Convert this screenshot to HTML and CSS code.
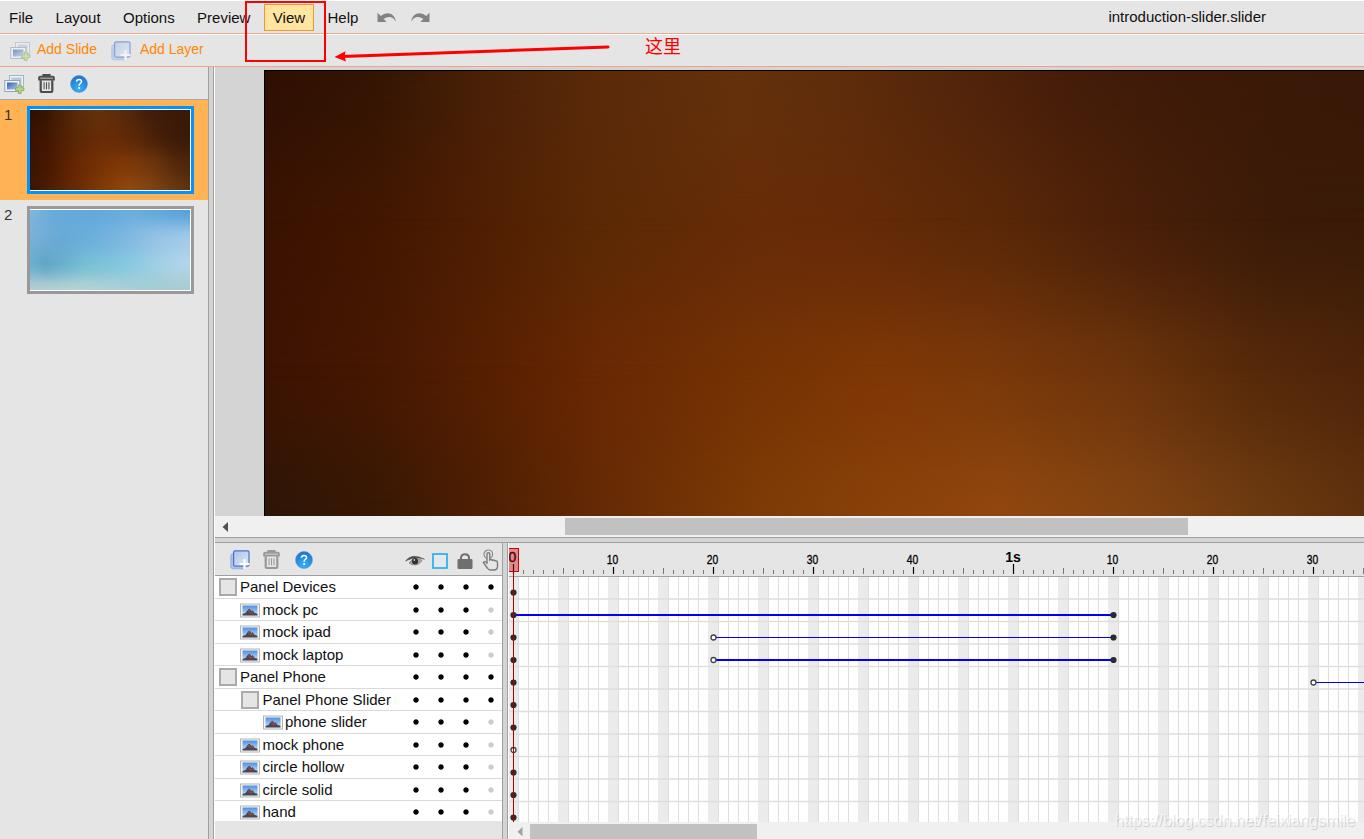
FILE: index.html
```html
<!DOCTYPE html>
<html lang="en">
<head>
    <meta charset="UTF-8">
    <meta name="viewport" content="width=device-width, initial-scale=1.0">
    <title>introduction-slider.slider</title>
    <link rel="stylesheet" href="styles.css">
</head>
<body>
    <svg class="defs" width="0" height="0">
        <defs>
            <linearGradient id="blueFill" x1="0" y1="0" x2="1" y2="1">
                <stop offset="0" stop-color="#2f5fb5"/>
                <stop offset="1" stop-color="#b5cdf0"/>
            </linearGradient>
            <linearGradient id="paperFill" x1="0" y1="0" x2="1" y2="1">
                <stop offset="0" stop-color="#a9c4e8"/>
                <stop offset="1" stop-color="#dfe9f7"/>
            </linearGradient>
            <radialGradient id="helpFill" cx="0.5" cy="0.8" r="0.8">
                <stop offset="0" stop-color="#35b5f5"/>
                <stop offset="1" stop-color="#2070cc"/>
            </radialGradient>
            <linearGradient id="skyFill" x1="0" y1="0" x2="0" y2="1">
                <stop offset="0" stop-color="#4f8fe0"/>
                <stop offset="1" stop-color="#c5e2fb"/>
            </linearGradient>
        </defs>
        <symbol id="icon-slide" viewBox="0 0 21 20">
            <rect x="5.5" y="1.5" width="14" height="11" fill="#eef2f5" stroke="#a3b5c2"/>
            <rect x="7.5" y="3.5" width="10" height="7" fill="#b5c8e0"/>
            <rect x="0.8" y="6.5" width="15" height="11" fill="#f2f5f8" stroke="#8fa5b5"/>
            <rect x="3" y="8.5" width="10.5" height="7" fill="url(#blueFill)"/>
            <path d="M14.3 11h2.8v2.8h2.8v2.8h-2.8v2.8h-2.8v-2.8h-2.8v-2.8h2.8z" fill="#b9d88a" stroke="#7da352" stroke-width="0.8"/>
        </symbol>
        <symbol id="icon-layer" viewBox="0 0 20 20">
            <rect x="0.8" y="3.8" width="15" height="15" rx="2" fill="#a9c2e6" stroke="#8aa8d6" stroke-width="0.8"/>
            <rect x="3.6" y="0.8" width="15.4" height="15.4" rx="1.5" fill="url(#paperFill)" stroke="#4d6fd6" stroke-width="1.2"/>
            <path d="M14.5 9v10M9.5 14h10" stroke="#fff" stroke-width="2.2" fill="none"/>
        </symbol>
        <symbol id="icon-trash" viewBox="0 0 16 18">
            <path d="M5 2.8V1h6v1.800" fill="none" stroke="currentColor" stroke-width="1.8"/>
            <path d="M1 5.2V3.600q0-1 1-1h12q1 0 1 1v1.600z" fill="none" stroke="currentColor" stroke-width="1.8"/>
            <path d="M2.5 6v9.600q0 1.500 1.500 1.500h8q1.500 0 1.500-1.500V6" fill="none" stroke="currentColor" stroke-width="2.1"/>
            <path d="M5.7 7.800v6.700M8 7.800v6.700M10.300 7.800v6.700" stroke="currentColor" stroke-width="1"/>
        </symbol>
        <symbol id="icon-help" viewBox="0 0 18 18">
            <circle cx="9" cy="9" r="8.4" fill="url(#helpFill)" stroke="#4a8fd2" stroke-width="0.6"/>
            <path d="M6.5 6.6Q6.700 4.400 9 4.400q2.500 0 2.500 2 0 1.200-1.300 2.100Q9.100 9.300 9.100 10.700" fill="none" stroke="#fff" stroke-width="1.5"/>
            <circle cx="9.1" cy="13" r="1" fill="#fff"/>
        </symbol>
        <symbol id="icon-undo" viewBox="0 0 20 12">
            <path d="M0.5 0.8V10h9.2L6.6 7.1q3.4-2.8 7-2 3 .8 5.3 4.3Q18 4.2 14 2 8.5-.4 3.8 4z" fill="#828282"/>
        </symbol>
        <symbol id="icon-image" viewBox="0 0 20 14">
            <rect x="0.5" y="0.5" width="19" height="13" fill="#f6f6f6" stroke="#b4b4b4"/>
            <rect x="2.5" y="2" width="15" height="10" fill="url(#skyFill)"/>
            <path d="M2.5 10.500l3-1 2.600-3.500 1.700-.8 1.400 2.300 1.400-.8 2.200 2.700 2.700.8V12h-15z" fill="#494752"/>
            <path d="M7.6 7l1.6-1.6 1.2 3 2-1 1.5 2.2-4 .4z" fill="#8a4a45"/>
        </symbol>
    </svg>

    <div class="app">
        <div class="menubar">
            <div class="menu">
                <span class="menu-item">File</span>
                <span class="menu-item">Layout</span>
                <span class="menu-item">Options</span>
                <span class="menu-item">Preview</span>
                <span class="menu-item active">View</span>
                <span class="menu-item">Help</span>
            </div>
            <svg class="undo" width="20" height="12"><use href="#icon-undo"/></svg>
            <svg class="undo redo" width="20" height="12"><use href="#icon-undo"/></svg>
            <span class="filename">introduction-slider.slider</span>
        </div>

        <div class="toolbar">
            <svg class="faded" width="21" height="20"><use href="#icon-slide"/></svg>
            <span class="tool-label">Add Slide</span>
            <svg class="faded layer" width="20" height="20"><use href="#icon-layer"/></svg>
            <span class="tool-label">Add Layer</span>
        </div>

        <div class="main">
            <div class="sidebar">
                <div class="side-tools">
                    <svg width="21" height="20"><use href="#icon-slide"/></svg>
                    <svg class="trash" width="17" height="19"><use href="#icon-trash"/></svg>
                    <svg width="18" height="18"><use href="#icon-help"/></svg>
                </div>
                <div class="slide selected">
                    <span class="slide-number">1</span>
                    <div class="thumb"><div class="art thumb-art brown"><i></i><i></i><i></i><i></i></div></div>
                </div>
                <div class="slide">
                    <span class="slide-number">2</span>
                    <div class="thumb"><div class="art blue"><i></i><i></i><i></i><i></i></div></div>
                </div>
            </div>

            <div class="splitter-v"></div>

            <div class="content">
                <div class="workspace">
                    <div class="stage"><div class="art brown"><i></i><i></i><i></i><i></i></div></div>
                </div>
                <div class="scrollbar">
                    <svg width="6" height="10"><path d="M6 0v10L0.5 5z" fill="#505050"/></svg>
                    <div class="scroll-thumb"></div>
                </div>
                <div class="splitter-h"></div>

                <div class="bottom">
                    <div class="layers">
                        <div class="layer-tools">
                            <svg class="add" width="20" height="20"><use href="#icon-layer"/></svg>
                            <svg class="trash light" width="17" height="19"><use href="#icon-trash"/></svg>
                            <svg class="help" width="18" height="18"><use href="#icon-help"/></svg>
                            <svg class="col-icon" width="20" height="14" viewBox="0 0 20 14">
                                <path d="M0.5 7Q7-1.500 19.500 5.300 12 2.500 7 4.500 3.500 5.500 0.500 7z" fill="#4a4a4a" stroke="#4a4a4a" stroke-width="0.5"/>
                                <path d="M4 9Q7 4.500 11 4.500q4 0 6 2Q14 11 10 11 6.500 11 4 9z" fill="#aaa" stroke="#777" stroke-width="0.7"/>
                                <circle cx="10" cy="7.2" r="3.1" fill="#303030"/>
                                <circle cx="9.3" cy="6" r="0.9" fill="#ccc"/>
                            </svg>
                            <svg class="col-icon" width="16" height="16"><rect x="1" y="1" width="14" height="14" fill="#e2e8ec" stroke="#1eaaf6" stroke-width="1.6"/></svg>
                            <svg class="col-icon" width="16" height="16" viewBox="0 0 16 16">
                                <path d="M4 7V5q0-3.800 4-3.800T12 5v2" fill="none" stroke="#6f6f6f" stroke-width="2"/>
                                <rect x="0.5" y="6" width="15" height="10" rx="1.2" fill="#6f6f6f"/>
                            </svg>
                            <svg class="col-icon" width="17" height="22" viewBox="0 0 17 22">
                                <circle cx="6.3" cy="5.3" r="4.3" fill="none" stroke="#8a8a8a" stroke-width="1.2"/>
                                <path d="M5 15V5.300q0-1.500 1.400-1.500t1.400 1.500V11q1.400-1 2.500.3 1.500-.8 2.500.5 2.700-.4 2.700 2v3.500q0 3.700-3.500 3.700H8.500q-2 0-3.200-2L1.400 13.400q1.200-1.800 3.600.6" fill="#e5e5e5" stroke="#7c7c7c" stroke-width="1.4"/>
                            </svg>
                        </div>
                        <div class="layer-list" id="layerList"></div>
                    </div>

                    <div class="splitter-v"></div>

                    <div class="timeline">
                        <svg class="ruler" id="ruler" width="855" height="33"></svg>
                        <svg class="grid" id="grid" width="855" height="245"></svg>
                        <div class="playhead"></div>
                        <div class="time-scroll">
                            <svg width="6" height="10"><path d="M5.5 0v9.500L0.500 4.700z" fill="#a3a3a3"/></svg>
                            <div class="time-thumb"></div>
                        </div>
                    </div>
                </div>
            </div>
        </div>
    </div>

    <div class="mark-box"></div>
    <svg class="mark-arrow" width="280" height="19" viewBox="0 0 280 19">
        <path d="M8 13.5L274 4" stroke="#fe0000" stroke-width="3" stroke-linecap="round"/>
        <path d="M0.5 13.900L11.500 8.300 10.500 13.200 12 18.500z" fill="#fe0000"/>
    </svg>
    <span class="mark-text">这里</span>
    <span class="watermark">https://blog.csdn.net/feixiangsmile</span>

    <script>
        // depth = indent level, keys = [frame, filled], bars = [from, to, thickness]
        const layers = [
            { name: "Panel Devices", depth: 0, panel: true, keys: [[0, 1]] },
            { name: "mock pc", depth: 1, keys: [[0, 1], [60, 1]], bars: [0, 60, 2] },
            { name: "mock ipad", depth: 1, keys: [[0, 1], [20, 0], [60, 1]], bars: [20, 60, 1] },
            { name: "mock laptop", depth: 1, keys: [[0, 1], [20, 0], [60, 1]], bars: [20, 60, 2] },
            { name: "Panel Phone", depth: 0, panel: true, keys: [[0, 1], [80, 0]], bars: [80, 90, 1] },
            { name: "Panel Phone Slider", depth: 1, panel: true, keys: [[0, 1]] },
            { name: "phone slider", depth: 2, keys: [[0, 1]] },
            { name: "mock phone", depth: 1, keys: [[0, 0]] },
            { name: "circle hollow", depth: 1, keys: [[0, 1]] },
            { name: "circle solid", depth: 1, keys: [[0, 1]] },
            { name: "hand", depth: 1, keys: [[0, 1]] }
        ];
        const ROW = 22.5;
        const X0 = 4.5;

        function drawLayers() {
            let html = "";
            layers.forEach(layer => {
                const icon = layer.panel
                    ? '<span class="panel-icon"></span>'
                    : '<svg class="image-icon" width="20" height="15"><use href="#icon-image"/></svg>';
                html += `<div class="layer-row depth-${layer.depth}">
                    <span class="layer-icon">${icon}</span><span class="layer-name">${layer.name}</span>
                    <span class="dots"><b></b><b></b><b></b><b class="${layer.panel ? "" : "off"}"></b></span>
                </div>`;
            });
            document.getElementById("layerList").innerHTML = html;
        }

        function drawRuler() {
            let svg = "";
            for (let f = 0; f <= 85; f++) {
                const x = X0 + f * 10;
                if (f % 50 === 0) svg += `<path d="M${x} 21v10" class="tick second"/>`;
                else if (f % 10 === 0) svg += `<path d="M${x} 24v7" class="tick major"/>`;
                else if (f % 5 === 0) svg += `<path d="M${x} 25v6" class="tick"/>`;
                else svg += `<path d="M${x} 27v4" class="tick"/>`;

                if (f === 0) svg += `<text x="3.5" y="19" class="zero">0</text>`;
                else if (f === 50) svg += `<text x="${x - 0.5}" y="19" class="sec">1s</text>`;
                else if (f % 10 === 0) svg += `<text x="${x - 1}" y="21" class="num" textLength="11.5" lengthAdjust="spacingAndGlyphs">${f % 50}</text>`;
            }
            document.getElementById("ruler").innerHTML = svg;
        }

        function drawGrid() {
            let svg = "";
            for (let f = 0; f <= 86; f++) {
                if (f % 5 === 0) svg += `<rect x="${f * 10 - 1}" y="0" width="10" height="245" fill="#ebebeb"/>`;
                svg += `<path d="M${f * 10 + 9.5} 0v245" stroke="#dedede"/>`;
            }
            for (let r = 1; r < layers.length; r++) {
                svg += `<path d="M0 ${r * ROW - 0.5}h855" stroke="#dedede" stroke-width="1.3"/>`;
            }
            layers.forEach((layer, r) => {
                const y = 15.5 + r * ROW;
                if (layer.bars) {
                    const [from, to, w] = layer.bars;
                    svg += `<path d="M${X0 + from * 10} ${w === 2 ? Math.round(y) : Math.floor(y) + 0.5}H${X0 + to * 10}" stroke="#0000fe" stroke-width="${w}"/>`;
                }
                layer.keys.forEach(([f, filled]) => {
                    svg += `<circle cx="${X0 + f * 10}" cy="${y}" r="${filled ? 3.1 : 2.5}" class="${filled ? "key" : "key hollow"}"/>`;
                });
            });
            document.getElementById("grid").innerHTML = svg;
        }

        drawLayers();
        drawRuler();
        drawGrid();
    </script>
</body>
</html>
```

FILE: styles.css
```css
* {
    box-sizing: border-box;
}

body {
    margin: 0;
    font-family: "Liberation Sans", Arial, "Noto Sans CJK SC", sans-serif;
    font-size: 15px;
    color: #111;
    background: #e5e5e5;
    overflow: hidden;
}

svg {
    display: block;
    flex: none;
}

.defs {
    position: absolute;
}

.app {
    width: 100%;
    height: 839px;
    display: flex;
    flex-direction: column;
}

/* menu */
.menubar {
    height: 34px;
    flex: none;
    display: flex;
    border-top: 1px solid #fff;
    border-bottom: 1px solid #f3a98c;
}

.menu {
    display: flex;
    gap: 4.4px;
    padding-top: 3px;
}

.menu-item {
    height: 27px;
    padding: 0 8px;
    line-height: 26px;
    border: 1px solid transparent;
}

.menu-item.active {
    background: #ffe5a0;
    border-color: #ee9736;
}

.undo {
    margin: 11px 0 0 10px;
}

.undo.redo {
    margin-left: 13px;
    transform: scaleX(-1);
}

.filename {
    margin-left: auto;
    margin-right: 98px;
    line-height: 32px;
}

.toolbar {
    height: 33px;
    flex: none;
    display: flex;
    align-items: center;
    border-top: 1px solid #fff;
    border-bottom: 1px solid #f3a383;
    padding-left: 10px;
    font-size: 14px;
    color: #ff8800;
}

.tool-label {
    margin-left: 6px;
    margin-top: -3px;
}

.faded {
    opacity: 0.6;
}

.faded.layer {
    margin: 0 3px 0 14px;
}

/* slides */
.main {
    flex: 1;
    display: flex;
    min-height: 0;
}

.sidebar {
    width: 208px;
    flex: none;
}

.side-tools {
    height: 33px;
    display: flex;
    align-items: center;
    gap: 12.5px;
    padding: 1px 0 0 4px;
    border-bottom: 1px solid #a9a9a9;
}

.side-tools svg:last-child {
    margin-left: 3px;
}

.trash {
    color: #4d4d4d;
}

.trash.light {
    color: #999;
}

.slide {
    height: 100px;
    display: flex;
    padding: 6px 0 0 4px;
}

.slide.selected {
    background: #ffb354;
}

.slide-number {
    width: 23px;
    color: #333;
}

.thumb {
    width: 167px;
    height: 88px;
    border: 3px solid #999;
    padding: 1px 1px 1px 0;
    background: #fff;
}

.selected .thumb {
    border-color: #0094ff;
}

/* slide artwork: horizontal colour bands, each fading into the next one down */
.art {
    width: 100%;
    height: 100%;
    display: grid;
}

.art i {
    grid-area: 1 / 1;
}

.art i:nth-child(2) {
    mask-image: linear-gradient(transparent 0%, rgba(0, 0, 0, 0.2) 10%, rgba(0, 0, 0, 0.5) 18%, rgba(0, 0, 0, 0.82) 27%, #000 37%);
}

.art i:nth-child(3) {
    mask-image: linear-gradient(transparent 33%, rgba(0, 0, 0, 0.18) 43%, rgba(0, 0, 0, 0.5) 53%, rgba(0, 0, 0, 0.82) 61%, #000 71%);
}

.art i:nth-child(4) {
    mask-image: linear-gradient(transparent 66%, rgba(0, 0, 0, 0.2) 76%, rgba(0, 0, 0, 0.5) 84%, rgba(0, 0, 0, 0.8) 91%, #000 100%);
}

.brown i:nth-child(1) {
    background: linear-gradient(90deg, #2e1003, #341504 10%, #4a2107 20%, #5a2a0a 30%, #64310c 43%, #5f2d0c 52%, #53250b 63%, #451d0a 73%, #3d1a08 84%, #3a1808);
}

.brown i:nth-child(2) {
    background: linear-gradient(90deg, #3b1202, #421701 10%, #501f03 20%, #5b2905 30%, #672c08 45%, #662b08 53%, #5a2808 67%, #481f09 80%, #3b1b08 92%, #3a1b08);
}

.brown i:nth-child(3) {
    background: linear-gradient(90deg, #3d1302, #461802 10%, #571f02 20%, #692803 30%, #773304 45%, #803706 56%, #7c390a 65%, #6e350c 78%, #572a0a 90%, #4f250a);
}

.brown i:nth-child(4) {
    background: linear-gradient(90deg, #2e1607, #381804 10%, #4e1f03 20%, #642a05 30%, #7e3b06 45%, #894208 56%, #91470e 67%, #804313 80%, #6a3910 92%, #60310e);
}

.thumb-art i {
    background-size: 108% 100%;
}

.thumb-art.brown i:nth-child(4) {
    background: linear-gradient(90deg, #3a1603, #521f03 15%, #6a2c05 30%, #843d07 48%, #91480f 62%, #804313 76%, #6a3910 90%, #60310e);
}

.blue i:nth-child(1) {
    background: linear-gradient(90deg, #7fb7de, #66acdb 15%, #62a9dc 40%, #69aedd 65%, #559fd7);
}

.blue i:nth-child(2) {
    background: linear-gradient(90deg, #79b0d8, #69a9d6 20%, #6cb0dc 40%, #80b7e0 60%, #98c4e6 80%, #a4cbea);
}

.blue i:nth-child(3) {
    background: linear-gradient(90deg, #6aafcd, #5fa6c5 10%, #76bfd5 35%, #86c9df 60%, #a8d2e6 85%, #b4d6ea);
}

.blue i:nth-child(4) {
    background: linear-gradient(90deg, #b3cfd4, #b5d3d3 30%, #a8d0d6 60%, #a4ccd4 80%, #a9ccce);
}

.splitter-v {
    width: 7px;
    flex: none;
    background: #d4d4d4;
    border-left: 1px solid #a0a0a0;
    border-right: 1px solid #fff;
    box-shadow: inset -1px 0 #a0a0a0;
}

.content {
    flex: 1;
    min-width: 0;
    display: flex;
    flex-direction: column;
}

.workspace {
    height: 449px;
    padding: 3px 0 0 49px;
    background: #d4d4d4;
}

.stage {
    height: 446px;
    border-top: 1px solid #000;
    border-left: 1px solid #000;
}

.scrollbar {
    height: 21px;
    display: flex;
    padding-left: 7px;
    background: #f0f0f0;
}

.scrollbar svg {
    margin-top: 6px;
}

.scroll-thumb {
    width: 623px;
    height: 17px;
    margin: 2px 0 0 337px;
    background: #c1c1c1;
}

.splitter-h {
    height: 6px;
    background: #d4d4d4;
    border-top: 1px solid #a0a0a0;
    border-bottom: 1px solid #a0a0a0;
}

/* layers + timeline */
.bottom {
    flex: 1;
    display: flex;
    min-height: 0;
}

.layers {
    width: 287px;
    flex: none;
}

.layer-tools {
    height: 33px;
    display: flex;
    align-items: center;
    padding: 1px 0 0 15px;
    border-bottom: 1px solid #a0a0a0;
}

.layer-tools .light {
    margin-left: 12.5px;
}

.layer-tools .help {
    margin: 0 92px 0 15.5px;
}

.col-icon {
    margin-top: 2px;
    margin-right: 7px;
}

.col-icon + .col-icon {
    margin-right: 9px;
}

.col-icon:last-child {
    margin-top: 0;
}

.layer-list {
    height: 245px;
    overflow: hidden;
    background: #fff;
}

.layer-row {
    height: 22.5px;
    display: flex;
    align-items: center;
    border-bottom: 1px solid #d9d9d9;
    padding: 0.8px 0 0 2.5px;
}

.depth-1 {
    padding-left: 25px;
}

.depth-2 {
    padding-left: 47.5px;
}

.layer-icon {
    width: 20px;
    margin-right: 2.5px;
    display: flex;
    justify-content: center;
}

.panel-icon {
    width: 18px;
    height: 18px;
    margin-left: 0.5px;
    border: 2px solid #aaa;
    background: #e5e5e5;
}

.image-icon {
    margin-top: 1px;
}

.layer-name {
    line-height: 20px;
}

.dots {
    display: flex;
    gap: 19px;
    margin-left: auto;
    margin-right: 8px;
}

.dots b {
    width: 6px;
    height: 6px;
    background: radial-gradient(circle, #000 2.2px, transparent 3.1px);
}

.dots .off {
    background: radial-gradient(circle, #ccc 2.2px, transparent 3.1px);
}

.timeline {
    position: relative;
    flex: 1;
    min-width: 0;
    overflow: hidden;
}

.ruler {
    background: #e5e5e5;
}

.grid {
    height: 246px;
    border-top: 1px solid #a0a0a0;
    background: #fff;
}

.tick {
    stroke: #777;
    stroke-width: 1;
}

.tick.major,
.tick.second {
    stroke: #000;
    stroke-width: 1.2;
}

.ruler text {
    fill: #000;
    text-anchor: middle;
}

.ruler .num {
    font-size: 12px;
    stroke: #000;
    stroke-width: 0.3;
}

.ruler .sec {
    font-size: 14px;
    font-weight: bold;
}

.ruler .zero {
    font-size: 14px;
    stroke: #000;
    stroke-width: 0.4;
}

.key {
    fill: #2b2b2b;
    stroke: none;
}

.key.hollow {
    fill: #fff;
    stroke: #444;
    stroke-width: 1.3;
}

.playhead {
    position: absolute;
    left: 0;
    top: 5px;
    width: 10px;
    height: 24px;
    border: 1px solid #c00;
    border-left: none;
    background: rgba(220, 0, 0, 0.4);
}

.playhead::after {
    content: "";
    position: absolute;
    left: 4px;
    top: 22px;
    width: 1px;
    height: 251px;
    background: #b00000;
}

.time-scroll {
    height: 17px;
    display: flex;
    padding-left: 8px;
    background: #f0f0f0;
}

.time-scroll svg {
    margin-top: 5px;
}

.time-thumb {
    width: 227px;
    margin: 2px 0 0 7px;
    background: #c1c1c1;
}

/* notes drawn over the window */
.mark-box {
    position: absolute;
    left: 245px;
    top: 1px;
    width: 81px;
    height: 61px;
    border: 2px solid #fe0000;
}

.mark-arrow {
    position: absolute;
    left: 334px;
    top: 43px;
}

.mark-text {
    position: absolute;
    left: 645px;
    top: 32px;
    font-family: "Noto Sans CJK SC", sans-serif;
    font-size: 18px;
    line-height: 26px;
    color: #fe0000;
}

.watermark {
    position: absolute;
    right: 9px;
    bottom: 8px;
    font-size: 16px;
    line-height: 20px;
    color: rgba(255, 255, 255, 0.7);
    text-shadow: 1px 1px 1px rgba(0, 0, 0, 0.16);
}
```
